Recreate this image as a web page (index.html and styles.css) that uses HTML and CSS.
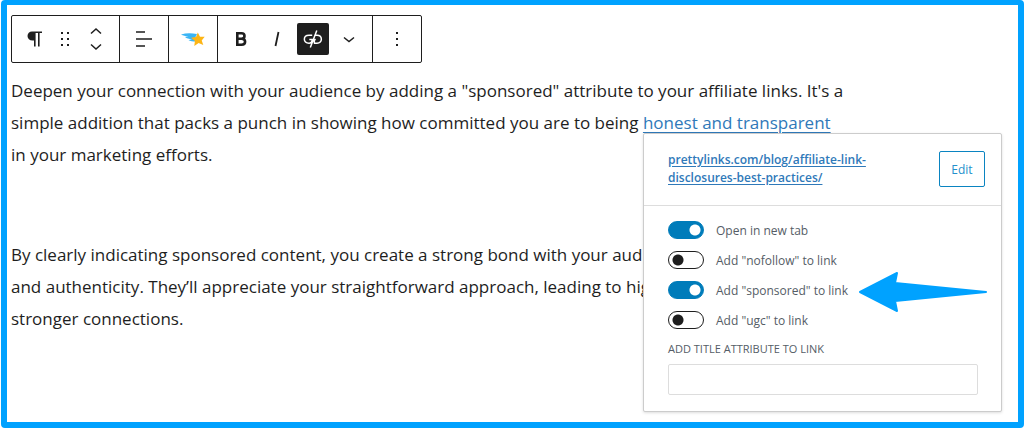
FILE: index.html
```html
<!DOCTYPE html>
<html lang="en">
<head>
<meta charset="utf-8">
<meta name="viewport" content="width=device-width, initial-scale=1">
<title>Block editor</title>
<link rel="stylesheet" href="styles.css">
</head>
<body>
<main class="editor">
  <div class="toolbar" role="toolbar" aria-label="Block tools">
    <div class="group group-block">
      <button class="tool" type="button" aria-label="Paragraph">
        <svg width="24" height="24" viewBox="0 0 24 24"><path fill="#1e1e1e" d="M11 4.500H21V6H18.600V19.500H17V6H14.600V19.500H13V13.500H11.500C8.500 13.500 6.500 11.600 6.500 9S8.500 4.500 11 4.500Z"/></svg>
      </button>
      <button class="tool" type="button" aria-label="Drag">
        <svg width="24" height="24" viewBox="0 0 24 24"><path fill="#1e1e1e" d="M8 5h2v2H8zM14 5h2v2h-2zM8 11h2v2H8zM14 11h2v2h-2zM8 17h2v2H8zM14 17h2v2h-2z"/></svg>
      </button>
      <div class="movers">
        <button class="mover" type="button" aria-label="Move up"><svg width="12" height="8" viewBox="0 0 12 8"><path class="line" d="M1 6.500 6 2l5 4.500"/></svg></button>
        <button class="mover" type="button" aria-label="Move down"><svg width="12" height="8" viewBox="0 0 12 8"><path class="line" d="M1 1.500 6 6l5-4.500"/></svg></button>
      </div>
    </div>
    <div class="group">
      <button class="tool" type="button" aria-label="Align text">
        <svg width="24" height="24" viewBox="0 0 24 24"><path class="line" d="M4 5h9M4 12h16M4 19h9"/></svg>
      </button>
    </div>
    <div class="group">
      <button class="tool" type="button" aria-label="Pretty Links">
        <svg width="26" height="24" viewBox="0 0 26 24"><path fill="#3bb5f5" d="M1 7.500C6 6 11 6 17 7L15 11 16 14.500C13 14.500 10 14 8.500 13L12 12.400C9 12 6.500 11.300 5 10.200L8.500 9.800C5.500 9.300 3 8.600 1 7.500Z"/><path fill="#fdb515" d="m17.800 5.500 2.200 4.300 4.700-.1-3 3.700 1.600 4.600-4.700-1.900-4.300 2.900.6-5-3.900-3.200 5-.8z"/></svg>
      </button>
    </div>
    <div class="group group-format">
      <button class="tool" type="button" aria-label="Bold">
        <svg width="24" height="24" viewBox="0 0 24 24"><path fill="none" stroke="#1e1e1e" stroke-width="2.600" d="M8.300 6.300H12.500C16.500 6.300 16.500 11.800 12.500 11.800H8.300M12.500 11.800C17.300 11.800 17.300 17.700 12.500 17.700H8.300V5"/></svg>
      </button>
      <button class="tool" type="button" aria-label="Italic">
        <svg width="24" height="24" viewBox="0 0 24 24"><path fill="none" stroke="#1e1e1e" stroke-width="1.800" d="m13.500 5-3 14"/></svg>
      </button>
      <button class="tool tool-active" type="button" aria-label="Unlink" aria-pressed="true">
        <svg width="24" height="24" viewBox="0 0 24 24"><path fill="none" stroke="#fff" stroke-width="1.500" d="M11.200 8.200H8C1.800 8.200 1.800 16.200 8 16.200C10 16.200 11 15 11.300 12.600H8.300M15.800 3.500 9.300 20.500M14.500 8.200H16C21.800 8.200 21.800 16.200 16 16.200H13.500C12.900 14.500 13.200 13 14.500 12"/></svg>
      </button>
      <button class="tool" type="button" aria-label="More formatting">
        <svg width="24" height="24" viewBox="0 0 24 24"><path class="line" d="m7 10.500 5 4 5-4"/></svg>
      </button>
    </div>
    <div class="group">
      <button class="tool" type="button" aria-label="Options">
        <svg width="24" height="24" viewBox="0 0 24 24"><path fill="#1e1e1e" d="M11 5h2v2h-2zM11 11h2v2h-2zM11 17h2v2h-2z"/></svg>
      </button>
    </div>
  </div>

  <p class="paragraph">Deepen your connection with your audience by adding a "sponsored" attribute to your affiliate links. It's a<br>simple addition that packs a punch in showing how committed you are to being <a class="text-link" href="#link">honest and transparent</a><br>in your marketing efforts.</p>
  <p class="paragraph">By clearly indicating sponsored content, you create a strong bond with your audience<br>and authenticity. They’ll appreciate your straightforward approach, leading to high<br>stronger connections.</p>

  <section class="popover" id="link" aria-label="Link settings">
    <div class="popover-head">
      <a class="url" href="#url">prettylinks.com/blog/affiliate-link-<br>disclosures-best-practices/</a>
      <button class="edit" type="button">Edit</button>
    </div>
    <div class="settings">
      <label class="option"><input class="toggle" type="checkbox" checked>Open in new tab</label>
      <label class="option"><input class="toggle" type="checkbox">Add "nofollow" to link</label>
      <label class="option"><input class="toggle" type="checkbox" checked>Add "sponsored" to link</label>
      <label class="option"><input class="toggle" type="checkbox">Add "ugc" to link</label>
      <label class="field-label" for="title-attr">ADD TITLE ATTRIBUTE TO LINK</label>
      <input class="field" id="title-attr" type="text">
    </div>
    <svg class="arrow" width="128" height="42" viewBox="0 0 128 42" aria-hidden="true"><path fill="#00a2ff" stroke="#00a2ff" stroke-width="2" stroke-linejoin="round" d="M1 21 38 2 36 12 127 21 36 30 38 40Z"/></svg>
  </section>
</main>
</body>
</html>
```
FILE: styles.css
```css
* {
  box-sizing: border-box;
}

body {
  margin: 0 0 0 1px;
  background: #fff;
  color: #1e1e1e;
  font-family: "Open Sans", "Noto Sans", sans-serif;
}

button {
  padding: 0;
  border: 0;
  background: none;
  font-family: inherit;
}

.editor {
  position: relative;
  min-height: 428px;
  padding: 10px 4px;
  border: 6px solid #00a2ff;
  border-top-width: 5px;
  border-radius: 4px;
}

.toolbar {
  display: flex;
  width: max-content;
  height: 48px;
  margin-bottom: 12px;
  border: 1px solid #1e1e1e;
  border-radius: 2px;
}

.group {
  display: flex;
  align-items: center;
  padding: 0 6px;
}

.group + .group {
  border-left: 1px solid #1e1e1e;
}

.group-block {
  padding: 0 8px 0 5px;
}

.group-format {
  padding: 0 5px;
}

.tool {
  display: grid;
  place-items: center;
  width: 36px;
  height: 32px;
}

.group-block .tool {
  width: 32px;
}

.tool-active {
  width: 32px;
  margin: 0 2px;
  border-radius: 2px;
  background: #1e1e1e;
}

.movers {
  display: grid;
  gap: 8px;
  width: 30px;
}

.mover {
  display: grid;
  place-items: center;
}

.line {
  fill: none;
  stroke: #1e1e1e;
  stroke-width: 1.5;
}

.paragraph {
  margin: 0 0 68px;
  font-size: 17px;
  line-height: 32px;
  white-space: nowrap;
}

.text-link {
  color: #2f79b9;
  text-decoration-thickness: 1px;
  text-underline-offset: 3px;
}

.popover {
  position: absolute;
  top: 128px;
  right: 16px;
  width: 359px;
  border: 1px solid #ccc;
  border-radius: 2px;
  background: #fff;
  box-shadow: 0 1px 3px #0002;
  color: #555d66;
  font-size: 12px;
}

.popover-head {
  display: flex;
  align-items: center;
  justify-content: space-between;
  padding: 17px 16px 18px 24px;
  border-bottom: 1px solid #ddd;
}

.url {
  color: #2f79b9;
  font-weight: 600;
  line-height: 18px;
  text-underline-offset: 2px;
}

.edit {
  width: 46px;
  height: 36px;
  border: 1px solid #0a84c1;
  border-radius: 2px;
  color: #2490cc;
  font-size: 12px;
}

.settings {
  display: grid;
  padding: 9px 23px 16px 24px;
}

.option {
  display: flex;
  align-items: center;
  gap: 12px;
  height: 30px;
}

.toggle {
  appearance: none;
  width: 36px;
  height: 18px;
  margin: 0;
  border: 1px solid #1e1e1e;
  border-radius: 9px;
  background: radial-gradient(circle at 9px 8px, #1e1e1e 5px, #fff 6px);
}

.toggle:checked {
  border-color: #007cba;
  background: radial-gradient(circle at 26px 8px, #fff 5px, #007cba 6px);
}

.field-label {
  margin: 5px 0 6px;
  font-size: 11px;
  font-weight: 500;
  line-height: 18px;
}

.field {
  width: 100%;
  height: 31px;
  padding: 0 8px;
  border: 1px solid #ddd;
  border-radius: 2px;
  font: inherit;
}

.arrow {
  position: absolute;
  top: 137px;
  right: 14px;
}
```
